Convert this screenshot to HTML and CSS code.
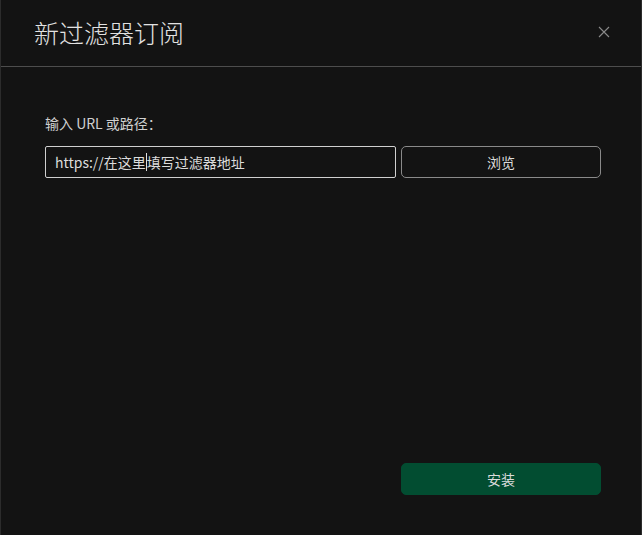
FILE: index.html
```html
<!DOCTYPE html>
<html lang="zh-CN">
<head>
<meta charset="utf-8">
<title>新过滤器订阅</title>
<link rel="stylesheet" href="styles.css">
</head>
<body>
<div class="dialog">
  <header class="header">
    <h1 class="title">新过滤器订阅</h1>
    <button class="close" aria-label="关闭">
      <svg width="12" height="12" viewBox="0 0 12 12"><path d="M1 1L11 11M11 1L1 11" stroke="#8a8a8a" stroke-width="1.1" fill="none"/></svg>
    </button>
  </header>
  <main class="body">
    <label class="label">输入 URL 或路径：</label>
    <div class="row">
      <div class="input">https://在这里<span class="caret"></span>填写过滤器地址</div>
      <button class="btn">浏览</button>
    </div>
    <div class="footer">
      <button class="btn primary">安装</button>
    </div>
  </main>
</div>
</body>
</html>
```

FILE: styles.css
```css
html, body {
  margin: 0;
  padding: 0;
  background: #131313;
}
body {
  font-family: "Noto Sans CJK SC", "Noto Sans", sans-serif;
  color: #d6d6d6;
}
.dialog {
  width: 642px;
  height: 535px;
  box-sizing: border-box;
  border-left: 1px solid #2c2c2c;
  border-right: 1px solid #2c2c2c;
  display: flex;
  flex-direction: column;
}
.header {
  height: 67px;
  box-sizing: border-box;
  border-bottom: 1px solid #4d4d4d;
  display: flex;
  align-items: center;
  justify-content: space-between;
  padding: 0 31px 0 33px;
}
.title {
  margin: 0;
  font-size: 25px;
  font-weight: 300;
  color: #e2e2e2;
  line-height: 32px;
  padding-bottom: 3px;
}
.close {
  background: none;
  border: none;
  padding: 0;
  width: 12px;
  height: 12px;
  display: flex;
  margin-bottom: 3px;
}
.body {
  flex: 1;
  display: flex;
  flex-direction: column;
  padding: 47px 40px 40px 44px;
}
.label {
  font-size: 14px;
  line-height: 18px;
  color: #d0d0d0;
}
.row {
  display: flex;
  gap: 5px;
  margin-top: 14px;
}
.input {
  width: 351px;
  height: 32px;
  box-sizing: border-box;
  border: 1px solid #d0d0d0;
  border-radius: 2px;
  padding: 0 9px;
  font-size: 14px;
  line-height: 30px;
  color: #dcdcdc;
  display: flex;
  align-items: center;
}
.caret {
  display: inline-block;
  width: 1px;
  height: 18px;
  background: #e0e0e0;
}
.btn {
  width: 200px;
  height: 32px;
  box-sizing: border-box;
  border: 1px solid #8a8a8a;
  border-radius: 5px;
  background: transparent;
  color: #dcdcdc;
  font-family: "Noto Sans CJK SC", sans-serif;
  font-size: 14px;
  padding: 0;
}
.footer {
  margin-top: auto;
  display: flex;
  justify-content: flex-end;
}
.btn.primary {
  background: #024d31;
  border-color: #024d31;
}
```
